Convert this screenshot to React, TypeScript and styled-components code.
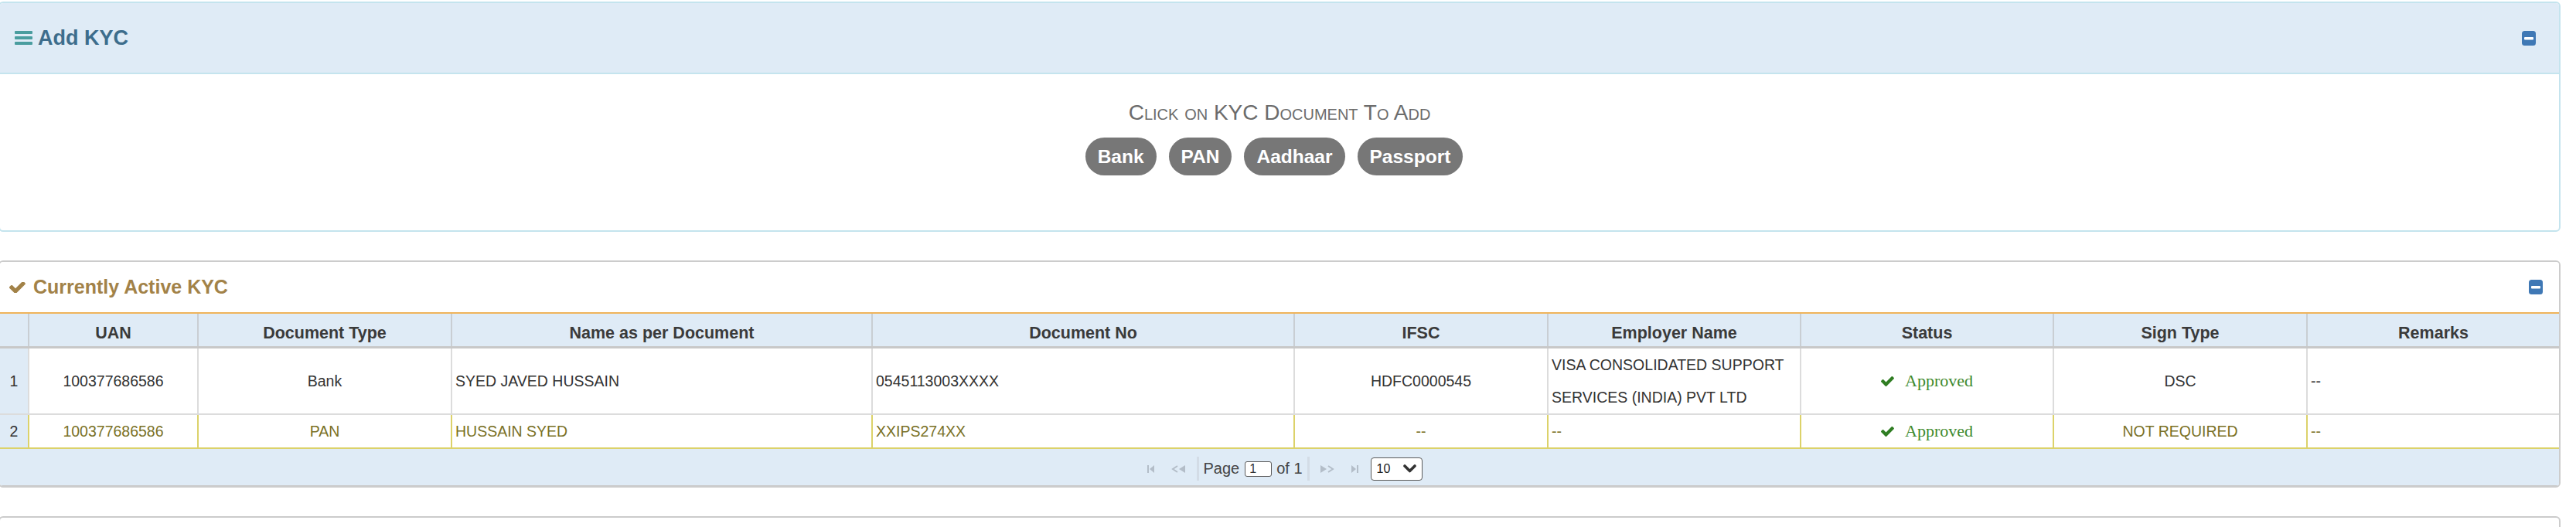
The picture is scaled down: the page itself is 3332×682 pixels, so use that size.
import styled, { createGlobalStyle } from "styled-components";

const GlobalStyle = createGlobalStyle`
  *, *::before, *::after { box-sizing: border-box; }
  html, body { margin: 0; padding: 0; background: #fff; }
  body {
    font-family: "Liberation Sans", Arial, sans-serif;
    color: #333;
    overflow: hidden;
  }
`;

const Page = styled.div`
  display: flex;
  flex-direction: column;
  gap: 37px;
  width: 3314px;
  margin-left: -2px;
  padding-top: 2px;
`;

const Panel = styled.section<{ $border: string }>`
  border: 2px solid ${({ $border }) => $border};
  border-radius: 6px;
  background: #fff;
  overflow: hidden;
`;

const PanelHeader = styled.header<{ $tone: "info" | "plain" }>`
  display: flex;
  align-items: center;
  justify-content: space-between;
  height: ${({ $tone }) => ($tone === "info" ? "92px" : "67px")};
  padding: ${({ $tone }) => ($tone === "info" ? "0 30px 0 19px" : "0 21px 0 12px")};
  background: ${({ $tone }) => ($tone === "info" ? "#dfebf6" : "#fff")};
  border-bottom: 2px solid
    ${({ $tone }) => ($tone === "info" ? "#c4e4ee" : "#efb35a")};
`;

const PanelTitle = styled.h2<{ $color: string; $size: number; $gap: number }>`
  display: flex;
  align-items: center;
  gap: ${({ $gap }) => $gap}px;
  margin: 0;
  font-size: ${({ $size }) => $size}px;
  font-weight: bold;
  color: ${({ $color }) => $color};
`;

const AddBody = styled.div`
  height: 202px;
  display: flex;
  flex-direction: column;
  align-items: center;
  padding-top: 34px;
  gap: 16px;
`;

const Hint = styled.p`
  margin: 0;
  font-size: 28px;
  line-height: 32px;
  font-variant: small-caps;
  color: #6c6c6c;
`;

const DocButtons = styled.div`
  display: flex;
  gap: 16px;
  margin-right: 14px;
`;

const DocButton = styled.button`
  height: 49px;
  padding: 0 16px;
  border: none;
  border-radius: 25px;
  background: #777;
  color: #fff;
  font-family: "Liberation Sans", Arial, sans-serif;
  font-size: 24.5px;
  font-weight: bold;
  cursor: pointer;
`;

const GRID_COLUMNS = "38px 219px 328px 544px 546px 328px 327px 327px 328px 1fr";

const GridRow = styled.div<{ $kind: "head" | "row" | "highlight" }>`
  display: grid;
  grid-template-columns: ${GRID_COLUMNS};
  border-bottom: ${({ $kind }) =>
    $kind === "head"
      ? "3px solid #c8c8c8"
      : $kind === "highlight"
      ? "2px solid #dcd26a"
      : "2px solid #dcdcdc"};
  background: ${({ $kind }) => ($kind === "head" ? "#dfebf6" : "#fff")};
  ${({ $kind }) => ($kind === "head" ? "height: 45px;" : "")}
`;

const HeadCell = styled.div`
  display: flex;
  align-items: center;
  justify-content: center;
  padding-top: 9px;
  border-right: 2px solid #c9ced3;
  font-size: 21.5px;
  font-weight: bold;
  color: #3a3a3a;
  &:last-child { border-right: none; }
`;

const Cell = styled.div<{ $align: "left" | "center"; $highlight?: boolean; $num?: boolean }>`
  display: flex;
  align-items: center;
  justify-content: ${({ $align }) => ($align === "center" ? "center" : "flex-start")};
  padding: 0 4px;
  font-size: 19.5px;
  line-height: 42px;
  text-align: ${({ $align }) => $align};
  color: ${({ $highlight, $num }) => ($num ? "#333" : $highlight ? "#7a7126" : "#333")};
  background: ${({ $num }) => ($num ? "#dfebf6" : "#fff")};
  border-right: 2px solid ${({ $highlight }) => ($highlight ? "#dcd26a" : "#dcdcdc")};
  &:last-child { border-right: none; }
`;

const StatusText = styled.span`
  display: inline-flex;
  align-items: center;
  gap: 14px;
  font-family: "Liberation Serif", "Times New Roman", serif;
  font-size: 22px;
  color: #3f8a2e;
`;

const Pager = styled.div`
  display: flex;
  align-items: center;
  justify-content: center;
  height: 48px;
  padding-top: 4px;
  background: #dfebf6;
  border-bottom: 1px solid #c8c8c8;
  font-size: 20px;
  color: #444;
`;

const NavButton = styled.span`
  display: inline-flex;
  align-items: center;
  justify-content: center;
  width: 36px;
  height: 30px;
`;

const PagerSep = styled.span`
  width: 3px;
  height: 31px;
  margin: 0 5px 0 6px;
  background: #d3dce6;
`;

const PageInput = styled.input`
  width: 35px;
  height: 20px;
  margin: 0 6px 0 7px;
  padding: 0 5px;
  border: 1.5px solid #5a5a5a;
  border-radius: 3px;
  font-family: "Liberation Sans", Arial, sans-serif;
  font-size: 16px;
  color: #333;
  background: #fff;
`;

const PageSize = styled.div`
  display: flex;
  align-items: center;
  justify-content: space-between;
  width: 67px;
  height: 30px;
  margin-left: 2px;
  padding: 0 7px 0 7px;
  border: 1.5px solid #5a5a5a;
  border-radius: 4px;
  background: #fff;
  font-size: 16px;
  color: #222;
`;

const NextPanel = styled(Panel)`
  height: 120px;
`;

function Bars() {
  return (
    <svg width="23" height="18" viewBox="0 0 23 18">
      <rect x="0" y="0" width="23" height="4" rx="1" fill="#4a9d9f" />
      <rect x="0" y="7" width="23" height="4" rx="1" fill="#4a9d9f" />
      <rect x="0" y="14" width="23" height="4" rx="1" fill="#4a9d9f" />
    </svg>
  );
}

const CHECK =
  "M1671 566q0 40-28 68l-724 724-136 136q-28 28-68 28t-68-28l-136-136-362-362q-28-28-28-68t28-68l136-136q28-28 68-28t68 28l294 295 656-657q28-28 68-28t68 28l136 136q28 28 28 68z";

function Check({ color, width, height }: { color: string; width: number; height: number }) {
  return (
    <svg width={width} height={height} viewBox="120 420 1560 1015">
      <path d={CHECK} fill={color} />
    </svg>
  );
}

function MinusSquare() {
  return (
    <svg width="18" height="19" viewBox="0 0 18 19">
      <rect x="0" y="0" width="18" height="19" rx="3.5" fill="#3f78b5" />
      <rect x="3" y="8" width="12" height="3.5" rx="1" fill="#fff" />
    </svg>
  );
}

function SeekIcon({ kind }: { kind: "first" | "prev" | "next" | "last" }) {
  const c = "#b3bdc8";
  if (kind === "first")
    return (
      <svg width="9" height="10" viewBox="0 0 9 10">
        <rect x="0" y="0" width="2" height="10" fill={c} />
        <path d="M9 0 L3 5 L9 10 Z" fill={c} />
      </svg>
    );
  if (kind === "last")
    return (
      <svg width="9" height="10" viewBox="0 0 9 10">
        <path d="M0 0 L6 5 L0 10 Z" fill={c} />
        <rect x="7" y="0" width="2" height="10" fill={c} />
      </svg>
    );
  if (kind === "prev")
    return (
      <svg width="20" height="10" viewBox="0 0 20 10">
        <path d="M9 1 L3 5 L9 9" fill="none" stroke={c} strokeWidth="2" />
        <path d="M19 0 L11 5 L19 10 Z" fill={c} />
      </svg>
    );
  return (
    <svg width="20" height="10" viewBox="0 0 20 10">
      <path d="M1 0 L9 5 L1 10 Z" fill={c} />
      <path d="M11 1 L17 5 L11 9" fill="none" stroke={c} strokeWidth="2" />
    </svg>
  );
}

function ChevronDown() {
  return (
    <svg width="17" height="11" viewBox="0 0 17 11">
      <path d="M2 2 L8.5 8.5 L15 2" fill="none" stroke="#333" strokeWidth="3.6" strokeLinecap="round" strokeLinejoin="round" />
    </svg>
  );
}

type Align = "left" | "center";

interface Column {
  key: keyof KycRow;
  label: string;
  align: Align;
}

interface KycRow {
  uan: string;
  type: string;
  name: string;
  docNo: string;
  ifsc: string;
  employer: string;
  status: string;
  sign: string;
  remarks: string;
}

const columns: Column[] = [
  { key: "uan", label: "UAN", align: "center" },
  { key: "type", label: "Document Type", align: "center" },
  { key: "name", label: "Name as per Document", align: "left" },
  { key: "docNo", label: "Document No", align: "left" },
  { key: "ifsc", label: "IFSC", align: "center" },
  { key: "employer", label: "Employer Name", align: "left" },
  { key: "status", label: "Status", align: "center" },
  { key: "sign", label: "Sign Type", align: "center" },
  { key: "remarks", label: "Remarks", align: "left" },
];

const rows: KycRow[] = [
  {
    uan: "100377686586",
    type: "Bank",
    name: "SYED JAVED HUSSAIN",
    docNo: "0545113003XXXX",
    ifsc: "HDFC0000545",
    employer: "VISA CONSOLIDATED SUPPORT SERVICES (INDIA) PVT LTD",
    status: "Approved",
    sign: "DSC",
    remarks: "--",
  },
  {
    uan: "100377686586",
    type: "PAN",
    name: "HUSSAIN SYED",
    docNo: "XXIPS274XX",
    ifsc: "--",
    employer: "--",
    status: "Approved",
    sign: "NOT REQUIRED",
    remarks: "--",
  },
];

export default function App() {
  return (
    <>
      <GlobalStyle />
      <Page>
        <Panel $border="#c4e4ee">
          <PanelHeader $tone="info">
            <PanelTitle $color="#3d6d8c" $size={27} $gap={7}>
              <Bars />
              Add KYC
            </PanelTitle>
            <MinusSquare />
          </PanelHeader>
          <AddBody>
            <Hint>Click on KYC Document To Add</Hint>
            <DocButtons>
              {["Bank", "PAN", "Aadhaar", "Passport"].map((doc) => (
                <DocButton key={doc}>{doc}</DocButton>
              ))}
            </DocButtons>
          </AddBody>
        </Panel>

        <Panel $border="#cccccc">
          <PanelHeader $tone="plain">
            <PanelTitle $color="#a28248" $size={25} $gap={10}>
              <Check color="#a28248" width={21} height={14} />
              Currently Active KYC
            </PanelTitle>
            <MinusSquare />
          </PanelHeader>

          <GridRow $kind="head">
            <HeadCell />
            {columns.map((col) => (
              <HeadCell key={col.key}>{col.label}</HeadCell>
            ))}
          </GridRow>

          {rows.map((row, i) => {
            const highlight = i === 1;
            return (
              <GridRow key={i} $kind={highlight ? "highlight" : "row"}>
                <Cell $align="center" $num $highlight={highlight}>
                  {i + 1}
                </Cell>
                {columns.map((col) => (
                  <Cell key={col.key} $align={col.align} $highlight={highlight}>
                    {col.key === "status" ? (
                      <StatusText>
                        <Check color="#2f7d22" width={17} height={13} />
                        {row.status}
                      </StatusText>
                    ) : (
                      row[col.key]
                    )}
                  </Cell>
                ))}
              </GridRow>
            );
          })}

          <Pager>
            <NavButton>
              <SeekIcon kind="first" />
            </NavButton>
            <NavButton>
              <SeekIcon kind="prev" />
            </NavButton>
            <PagerSep />
            Page
            <PageInput value="1" readOnly />
            of 1
            <PagerSep />
            <NavButton>
              <SeekIcon kind="next" />
            </NavButton>
            <NavButton>
              <SeekIcon kind="last" />
            </NavButton>
            <PageSize>
              10
              <ChevronDown />
            </PageSize>
          </Pager>
        </Panel>

        <NextPanel $border="#cccccc" />
      </Page>
    </>
  );
}
